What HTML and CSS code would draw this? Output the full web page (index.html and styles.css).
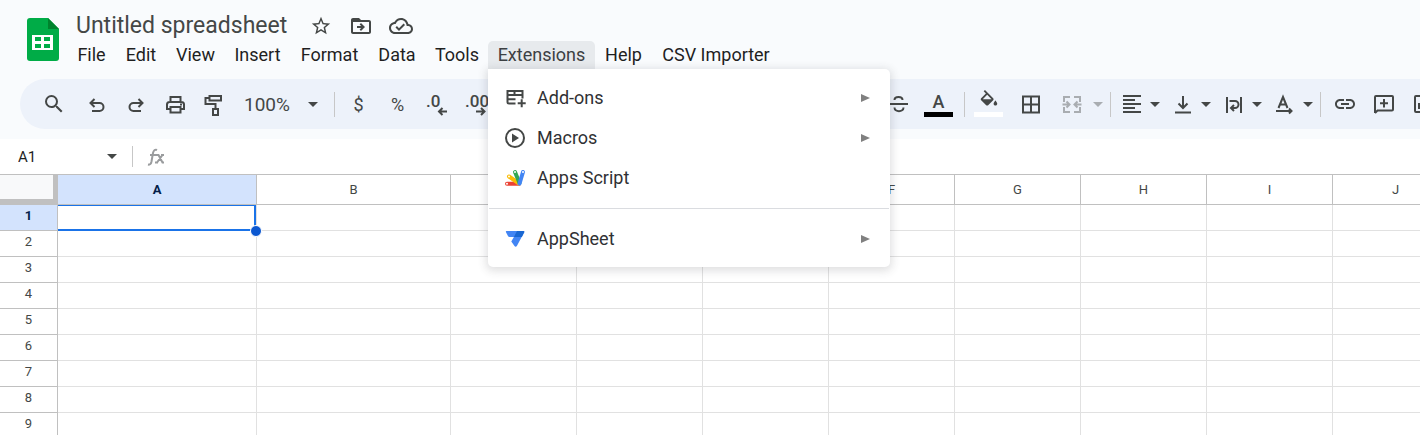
FILE: index.html
```html
<!DOCTYPE html>
<html lang="en">
<head>
<meta charset="utf-8">
<title>Untitled spreadsheet</title>
<link rel="stylesheet" href="styles.css">
</head>
<body>
<div class="app">
  <header class="header">
    <svg class="logo" viewBox="0 0 32 43" aria-hidden="true">
      <path fill="#00ac47" d="M3 0h18l11 11v29a3 3 0 0 1-3 3H3a3 3 0 0 1-3-3V3a3 3 0 0 1 3-3z"/>
      <path fill="#00832d" d="M21 0l11 11H21z"/>
      <path fill="#fff" fill-rule="evenodd" d="M5 17h21v15H5zM8 19v4h6v-4zm9 0v4h6v-4zM8 26v4h6v-4zm9 0v4h6v-4z"/>
    </svg>
    <div class="header-main">
      <div class="title-row">
        <input class="title" type="text" value="Untitled spreadsheet" aria-label="Rename">
        <button class="title-button" aria-label="Star"><svg class="icon icon-small" viewBox="0 0 24 24"><path d="M22 9.24l-7.19-.62L12 2 9.19 8.63 2 9.24l5.46 4.73L5.82 21 12 17.27 18.18 21l-1.63-7.03L22 9.24zM12 15.4l-3.76 2.27 1-4.28-3.32-2.88 4.38-.38L12 6.1l1.71 4.04 4.38.38-3.32 2.88 1 4.28L12 15.4z"/></svg></button>
        <button class="title-button" aria-label="Move"><svg class="icon" viewBox="0 0 24 24"><path d="M20 6h-8l-2-2H4c-1.1 0-2 .9-2 2v12c0 1.1.9 2 2 2h16c1.1 0 2-.9 2-2V8c0-1.1-.9-2-2-2zm0 12H4V8h16v10zm-7.84-6H8v2h4.16l-1.59 1.59L11.99 17 16 13.01 11.99 9l-1.41 1.41L12.16 12z"/></svg></button>
        <button class="title-button" aria-label="Document status"><svg class="icon" viewBox="0 0 24 24"><path d="M19.35 10.04C18.67 6.59 15.64 4 12 4 9.11 4 6.6 5.64 5.35 8.04 2.34 8.36 0 10.91 0 14c0 3.31 2.69 6 6 6h13c2.76 0 5-2.24 5-5 0-2.64-2.05-4.78-4.65-4.96zM19 18H6c-2.21 0-4-1.79-4-4 0-2.05 1.53-3.76 3.56-3.97l1.07-.11.5-.95C8.08 7.14 9.94 6 12 6c2.62 0 4.88 1.86 5.39 4.43l.3 1.5 1.53.11c1.56.1 2.78 1.41 2.78 2.96 0 1.65-1.35 3-3 3zm-9-3.82l-2.09-2.09L6.5 13.5 10 17l6.01-6.01-1.41-1.41z"/></svg></button>
      </div>
      <nav class="menubar" aria-label="Main menu">
        <button class="menu-button">File</button>
        <button class="menu-button">Edit</button>
        <button class="menu-button">View</button>
        <button class="menu-button">Insert</button>
        <button class="menu-button">Format</button>
        <button class="menu-button">Data</button>
        <button class="menu-button">Tools</button>
        <div class="menu-anchor">
          <button class="menu-button menu-button-open" aria-expanded="true">Extensions</button>
          <div class="menu">
            <button class="menu-item">
              <svg class="menu-icon" viewBox="0 0 24 24"><path class="line" d="M12.500 17.500H6q-1.500 0-1.500-1.500V5H19.500V12.500M4.500 9H19.500M4.500 13.200H12.500M11.500 5V9M18.700 13.300v8M14.700 17.300h8"/></svg>
              <span class="menu-label">Add-ons</span>
              <svg class="submenu-arrow" viewBox="0 0 9 8"><path d="M0 0l9 4-9 4z"/></svg>
            </button>
            <button class="menu-item">
              <svg class="menu-icon" viewBox="0 0 24 24"><circle class="line" cx="12" cy="12" r="9"/><path d="M9 7.500l7 4.500-7 4.500z"/></svg>
              <span class="menu-label">Macros</span>
              <svg class="submenu-arrow" viewBox="0 0 9 8"><path d="M0 0l9 4-9 4z"/></svg>
            </button>
            <button class="menu-item">
              <svg class="menu-icon" viewBox="0 0 24 24">
                <g fill="none" stroke-width="4" stroke-linecap="round">
                  <path stroke="#ea4335" d="M4 17.700H16"/><path stroke="#fbbc04" d="M6 10.500l10 7"/><path stroke="#34a853" d="M12 6l4.500 11"/><path stroke="#4285f4" d="M20 6l-3.500 11.700"/>
                </g>
                <g fill="#fff"><circle cx="4" cy="17.700" r="1"/><circle cx="6" cy="10.500" r="1"/><circle cx="12" cy="6" r="1"/><circle cx="20" cy="6" r="1"/></g>
              </svg>
              <span class="menu-label">Apps Script</span>
            </button>
            <hr class="menu-divider">
            <button class="menu-item">
              <svg class="menu-icon" viewBox="0 0 24 24"><path fill="#4285f4" d="M3.500 4h17q1.200 0 .7 1.200L14 18.800q-1.300 2-2.700 0L8.300 14.500l2.600-4.500H6.500q-1 0-1.400-.8L3 5.200Q2.500 4 3.500 4z"/><path fill="#1967d2" d="M14 4h6.500q1.200 0 .7 1.200L18.900 10h-8z"/></svg>
              <span class="menu-label">AppSheet</span>
              <svg class="submenu-arrow" viewBox="0 0 9 8"><path d="M0 0l9 4-9 4z"/></svg>
            </button>
          </div>
        </div>
        <button class="menu-button">Help</button>
        <button class="menu-button">CSV Importer</button>
      </nav>
    </div>
  </header>

  <div class="toolbar" role="toolbar" aria-label="Main">
    <button class="tool tool-search" aria-label="Search the menus"><svg class="icon" viewBox="0 0 24 24"><path d="M15.500 14h-.79l-.28-.27A6.471 6.471 0 0 0 16 9.500 6.500 6.500 0 1 0 9.500 16c1.610 0 3.090-.59 4.230-1.570l.27.28v.79l5 4.990L20.490 19l-4.990-5zm-6 0C7.010 14 5 11.990 5 9.500S7.010 5 9.500 5 14 7.010 14 9.500 11.990 14 9.500 14z"/></svg></button>
    <button class="tool" aria-label="Undo"><svg class="icon" viewBox="0 0 24 24"><path class="line" d="M9.500 7l-4 4 4 4M6 11h8.500a4 4 0 0 1 0 8H7"/></svg></button>
    <button class="tool" aria-label="Redo"><svg class="icon" viewBox="0 0 24 24"><path class="line" d="M14.500 7l4 4-4 4M18 11H9.500a4 4 0 0 0 0 8H17"/></svg></button>
    <button class="tool" aria-label="Print"><svg class="icon" viewBox="0 0 24 24"><path class="line" d="M7.500 10V5h10v5M7.500 17H4v-4.500Q4 10 6.500 10h12Q21 10 21 12.500V17h-3.500M7.500 15h10v5.500h-10z"/><path d="M17 11.500h2v2h-2z"/></svg></button>
    <button class="tool" aria-label="Paint format"><svg class="icon" viewBox="0 0 24 24"><path class="line" d="M7.500 4H19v4.500H7.500zM7.500 6H3.500v6h10v5M11 17h5v6h-5z"/></svg></button>
    <div class="zoom">
      <select class="zoom-select" aria-label="Zoom"><option>100%</option></select>
      <svg class="caret zoom-caret" viewBox="0 0 10 5"><path d="M0 0h10L5 5z"/></svg>
    </div>
    <span class="separator"></span>
    <button class="tool tool-text" aria-label="Format as currency">$</button>
    <button class="tool tool-text" aria-label="Format as percent">%</button>
    <button class="tool" aria-label="Decrease decimal places"><svg class="icon icon-decimal" viewBox="0 0 30 24"><text class="decimal" x="4" y="15">.0</text><path class="line" d="M25 19.500h-8M20.500 16l-3.500 3.500 3.500 3.500"/></svg></button>
    <button class="tool" aria-label="Increase decimal places"><svg class="icon icon-decimal" viewBox="0 0 30 24"><text class="decimal" x="4" y="15">.00</text><path class="line" d="M15 19.500h8M20 16l3.500 3.500-3.500 3.500"/></svg></button>
    <span class="toolbar-space"></span>
    <button class="tool" aria-label="Strikethrough"><svg class="icon" viewBox="0 0 24 24"><path class="line" d="M2 12h18M6.500 8c0-4 8-4 8 0M6.500 15.500c0 5 9 5 9 0"/></svg></button>
    <button class="tool tool-swatch" aria-label="Text color"><span class="letter">A</span><span class="swatch swatch-black"></span></button>
    <span class="separator separator-fill"></span>
    <button class="tool tool-swatch" aria-label="Fill color"><svg class="icon" viewBox="0 0 24 24"><path d="M16.560 8.940L7.620 0 6.210 1.410l2.380 2.380-5.150 5.150c-.59.59-.59 1.540 0 2.120l5.500 5.500c.29.29.68.44 1.060.44s.77-.15 1.060-.44l5.500-5.500c.59-.58.59-1.530 0-2.120zM5.210 10L10 5.210 14.790 10H5.210zM19 11.500s-2 2.170-2 3.500c0 1.100.9 2 2 2s2-.9 2-2c0-1.330-2-3.500-2-3.500z"/></svg><span class="swatch swatch-white"></span></button>
    <button class="tool tool-borders" aria-label="Borders"><svg class="icon" viewBox="0 0 24 24"><path class="line" d="M4 4.500h16v16H4zM12 4.500v16M4 12.500h16"/></svg></button>
    <button class="tool-merge" aria-label="Merge cells" disabled><svg class="icon" viewBox="0 0 24 24"><path class="line" d="M10 5H4v5M14 5h6v5M10 20H4v-5M14 20h6v-5M2.500 12.500H9M6.500 9.500l3 3-3 3M21.500 12.500H15M17.500 9.500l-3 3 3 3"/></svg><svg class="caret" viewBox="0 0 10 5"><path d="M0 0h10L5 5z"/></svg></button>
    <span class="separator"></span>
    <button class="tool-split" aria-label="Horizontal align"><svg class="icon" viewBox="0 0 24 24"><path d="M15 15H3v2h12v-2zm0-8H3v2h12V7zM3 13h18v-2H3v2zm0 8h18v-2H3v2zM3 3v2h18V3H3z"/></svg><svg class="caret" viewBox="0 0 10 5"><path d="M0 0h10L5 5z"/></svg></button>
    <button class="tool-split" aria-label="Vertical align"><svg class="icon" viewBox="0 0 24 24"><path class="line" d="M12 4v12M7.500 11.500L12 16l4.500-4.500M4 20.500h16"/></svg><svg class="caret" viewBox="0 0 10 5"><path d="M0 0h10L5 5z"/></svg></button>
    <button class="tool-split" aria-label="Text wrapping"><svg class="icon" viewBox="0 0 24 24"><path class="line" d="M5 5v16M19 5v16M7.500 9h5.500a3.500 3.500 0 0 1 0 7H9.500M12 13l-3 3 3 3"/></svg><svg class="caret" viewBox="0 0 10 5"><path d="M0 0h10L5 5z"/></svg></button>
    <button class="tool-split" aria-label="Text rotation"><svg class="icon" viewBox="0 0 24 24"><path class="line" d="M5.500 16L10 5l4.500 11M7 12.500h6M3 19h15M16 16.500l2.500 2.500-2.500 2.500"/></svg><svg class="caret" viewBox="0 0 10 5"><path d="M0 0h10L5 5z"/></svg></button>
    <span class="separator separator-end"></span>
    <button class="tool" aria-label="Insert link"><svg class="icon" viewBox="0 0 24 24"><path d="M3.900 12c0-1.710 1.390-3.100 3.100-3.100h4V7H7c-2.760 0-5 2.240-5 5s2.240 5 5 5h4v-1.900H7c-1.710 0-3.100-1.390-3.100-3.100zM8 13h8v-2H8v2zm9-6h-4v1.900h4c1.710 0 3.100 1.390 3.100 3.100s-1.390 3.100-3.100 3.100h-4V17h4c2.760 0 5-2.240 5-5s-2.240-5-5-5z"/></svg></button>
    <button class="tool" aria-label="Insert comment"><svg class="icon" viewBox="0 0 24 24"><path class="line" d="M3 21V5q0-1 1-1h16q1 0 1 1v12.500q0 1-1 1H5.500L3 21M12 7v8.500M8 11.200h8"/></svg></button>
    <button class="tool" aria-label="Insert chart"><svg class="icon" viewBox="0 0 24 24"><path class="line" d="M5 4h14q1 0 1 1v14q0 1-1 1H5q-1 0-1-1V5q0-1 1-1zM8 11v6M12 7v10M16 13v4"/></svg></button>
  </div>

  <div class="formula-bar">
    <input class="name-box" type="text" value="A1" aria-label="Name box">
    <button class="name-caret" aria-label="Named ranges"><svg class="caret" viewBox="0 0 10 5"><path d="M0 0h10L5 5z"/></svg></button>
    <span class="formula-separator"></span>
    <svg class="fx" viewBox="0 0 18 18" aria-hidden="true"><path d="M1 16.500c2 .5 3-.5 3.500-3l1.500-8.500c.5-2.500 2-4 4-3M3 7h6M9 7h2.500l4 7.500H17M17 7h-1.500L10 14.500H8M14 7h3M8 14.500h3"/></svg>
    <input class="formula-input" type="text" aria-label="Formula">
  </div>

  <div class="sheet">
    <table class="grid">
      <colgroup><col class="col-row"><col class="col-a"><col class="col-b"><col class="col"><col class="col"><col class="col"><col class="col"><col class="col"><col class="col"><col class="col"><col class="col"></colgroup>
      <thead>
        <tr><td class="corner"></td><th class="active" scope="col">A</th><th scope="col">B</th><th scope="col">C</th><th scope="col">D</th><th scope="col">E</th><th scope="col">F</th><th scope="col">G</th><th scope="col">H</th><th scope="col">I</th><th scope="col">J</th></tr>
      </thead>
      <tbody>
        <tr><th class="active" scope="row">1</th><td class="selected"><span class="selection"></span><span class="handle"></span></td><td></td><td></td><td></td><td></td><td></td><td></td><td></td><td></td><td></td></tr>
        <tr><th scope="row">2</th><td></td><td></td><td></td><td></td><td></td><td></td><td></td><td></td><td></td><td></td></tr>
        <tr><th scope="row">3</th><td></td><td></td><td></td><td></td><td></td><td></td><td></td><td></td><td></td><td></td></tr>
        <tr><th scope="row">4</th><td></td><td></td><td></td><td></td><td></td><td></td><td></td><td></td><td></td><td></td></tr>
        <tr><th scope="row">5</th><td></td><td></td><td></td><td></td><td></td><td></td><td></td><td></td><td></td><td></td></tr>
        <tr><th scope="row">6</th><td></td><td></td><td></td><td></td><td></td><td></td><td></td><td></td><td></td><td></td></tr>
        <tr><th scope="row">7</th><td></td><td></td><td></td><td></td><td></td><td></td><td></td><td></td><td></td><td></td></tr>
        <tr><th scope="row">8</th><td></td><td></td><td></td><td></td><td></td><td></td><td></td><td></td><td></td><td></td></tr>
        <tr><th scope="row">9</th><td></td><td></td><td></td><td></td><td></td><td></td><td></td><td></td><td></td><td></td></tr>
      </tbody>
    </table>
  </div>
</div>
</body>
</html>
```

FILE: styles.css
```css
* {
  box-sizing: border-box;
}

body {
  margin: 0;
  overflow: hidden;
  background: #f9fbfd;
  color: #1f1f1f;
  font-family: Roboto, "Liberation Sans", sans-serif;
}

button,
input,
select {
  margin: 0;
  padding: 0;
  border: 0;
  background: none;
  color: inherit;
  font-family: inherit;
}

.app {
  display: flex;
  flex-direction: column;
  height: 100vh;
}

/* Header */
.header {
  display: flex;
  flex: none;
  padding-bottom: 10px;
}

.logo {
  flex: none;
  width: 32px;
  height: 43px;
  margin: 18px 9px 0 27px;
}

.title-row {
  display: flex;
  align-items: center;
  height: 41px;
  padding-top: 10px;
}

.title {
  width: 233px;
  height: 30px;
  padding-left: 8px;
  color: #444746;
  font-size: 23px;
}

.title-button {
  display: flex;
  align-items: center;
  justify-content: center;
  width: 40px;
  height: 30px;
}

.icon {
  flex: none;
  width: 24px;
  height: 24px;
  fill: #444746;
  color: #444746;
}

.icon-small {
  width: 22px;
  height: 22px;
}

.icon-decimal {
  width: 30px;
}

.line {
  fill: none;
  stroke: #444746;
  stroke-width: 2;
}

.menubar {
  display: grid;
  grid-template-columns: 47px 52px 57px 67px 77px 58px 62px 107px 57px 128px;
  height: 28px;
}

.menu-button {
  width: 100%;
  height: 28px;
  padding-bottom: 2px;
  font-size: 18px;
  border-radius: 5px;
  white-space: nowrap;
}

.menu-button-open {
  background: #e7eaed;
  border-radius: 5px 5px 0 0;
  color: #3c4043;
}

.menu-anchor {
  position: relative;
}

.menu {
  position: absolute;
  z-index: 10;
  top: 100%;
  left: 0;
  width: 402px;
  padding: 9px 0 8px;
  background: #fff;
  border-radius: 0 5px 5px 5px;
  box-shadow: 0 2px 8px 2px rgba(60, 64, 67, 0.16);
}

.menu-item {
  display: flex;
  align-items: center;
  width: 100%;
  height: 40px;
  padding: 0 20px 0 15px;
  color: #303134;
  font-size: 18px;
  text-align: left;
}

.menu-icon {
  flex: none;
  width: 24px;
  height: 24px;
  margin-right: 10px;
  fill: #444746;
}

.menu-label {
  flex: 1;
  padding-bottom: 2px;
}

.submenu-arrow {
  width: 9px;
  height: 8px;
  fill: #808080;
}

.menu-divider {
  height: 1px;
  margin: 10px 1px;
  border: 0;
  background: #dadce0;
}

/* Toolbar */
.toolbar {
  display: flex;
  flex: none;
  align-items: center;
  height: 50px;
  margin-left: 20px;
  padding-left: 14px;
  overflow: hidden;
  background: #edf2fa;
  border-radius: 25px 0 0 25px;
  color: #444746;
}

.tool {
  display: flex;
  flex: none;
  align-items: center;
  justify-content: center;
  width: 39px;
  height: 38px;
}

.tool-search {
  margin-right: 4px;
}

.tool-text {
  font-size: 18px;
}

.decimal {
  font-size: 17px;
  font-weight: 500;
}

.zoom {
  position: relative;
  flex: none;
  width: 89px;
  margin-left: 7px;
}

.zoom-select {
  width: 100%;
  height: 34px;
  padding-left: 4px;
  appearance: none;
  font-size: 19px;
}

.zoom-caret {
  position: absolute;
  top: 15px;
  right: 11px;
  pointer-events: none;
}

.caret {
  flex: none;
  width: 10px;
  height: 5px;
  fill: #444746;
}

.separator {
  flex: none;
  width: 1px;
  height: 25px;
  margin: 0 4px 0 5px;
  background: #c7c7c7;
}

.separator-fill {
  margin-left: 6px;
}

.separator-end {
  margin-left: 1px;
}

.toolbar-space {
  flex: none;
  width: 385px;
}

.tool-swatch {
  flex-direction: column;
  justify-content: flex-end;
  height: 38px;
  padding-bottom: 6px;
}

.letter {
  font-size: 18px;
  font-weight: 500;
  line-height: 21px;
}

.tool-swatch .icon {
  height: 22px;
}

.swatch {
  flex: none;
  width: 29px;
  height: 5px;
}

.swatch-black {
  background: #000;
}

.swatch-white {
  background: #fff;
}

.tool-borders {
  margin-left: 3px;
}

.tool-merge {
  display: flex;
  flex: none;
  align-items: center;
  gap: 9px;
  padding: 0 2px 0 10px;
  opacity: 0.4;
}

.tool-split {
  display: flex;
  flex: none;
  align-items: center;
  gap: 6px;
  padding: 0 6px 0 5px;
}

/* Formula bar */
.formula-bar {
  display: flex;
  flex: none;
  align-items: center;
  height: 36px;
  margin-top: 10px;
  background: #fff;
  border-bottom: 1px solid #c0c0c0;
}

.name-box {
  width: 99px;
  height: 28px;
  padding-left: 18px;
  font-size: 15px;
}

.name-caret {
  display: flex;
  align-items: center;
  justify-content: center;
  width: 26px;
  height: 28px;
}

.formula-separator {
  width: 1px;
  height: 21px;
  margin: 0 14px 0 7px;
  background: #c7c7c7;
}

.fx {
  width: 18px;
  height: 18px;
  fill: none;
  stroke: #9a9c9e;
  stroke-width: 2;
}

.formula-input {
  flex: 1;
  height: 28px;
}

/* Grid */
.sheet {
  flex: 1;
  min-height: 0;
  overflow: hidden;
  background: #fff;
}

.grid {
  width: 1459px;
  table-layout: fixed;
  border-collapse: separate;
  border-spacing: 0;
  font-size: 13px;
}

.col-row {
  width: 58px;
}

.col-a {
  width: 199px;
}

.col-b {
  width: 194px;
}

.col {
  width: 126px;
}

.grid th,
.grid td {
  height: 26px;
  padding: 0;
  border: solid #e1e1e1;
  border-width: 0 1px 1px 0;
}

.grid th {
  padding-bottom: 4px;
  border-color: #c0c0c0;
  color: #444746;
  font-weight: 400;
}

.grid thead th,
.grid thead td {
  height: 30px;
  padding-bottom: 0;
}

.grid th.active {
  background: #d3e3fd;
  color: #041e49;
  font-weight: 700;
}

.grid td.corner {
  background: #f8f9fa;
  border-color: #c0c0c0;
  border-width: 0 5px 6px 0;
}

.selected {
  position: relative;
}

.selection {
  position: absolute;
  inset: 0;
  border: solid #1a73e8;
  border-width: 1px 2px 2px 0;
  margin-bottom: -1px;
}

.handle {
  position: absolute;
  right: -6px;
  bottom: -7px;
  width: 12px;
  height: 12px;
  background: #0b57d0;
  border: 1px solid #fff;
  border-radius: 50%;
}
```
